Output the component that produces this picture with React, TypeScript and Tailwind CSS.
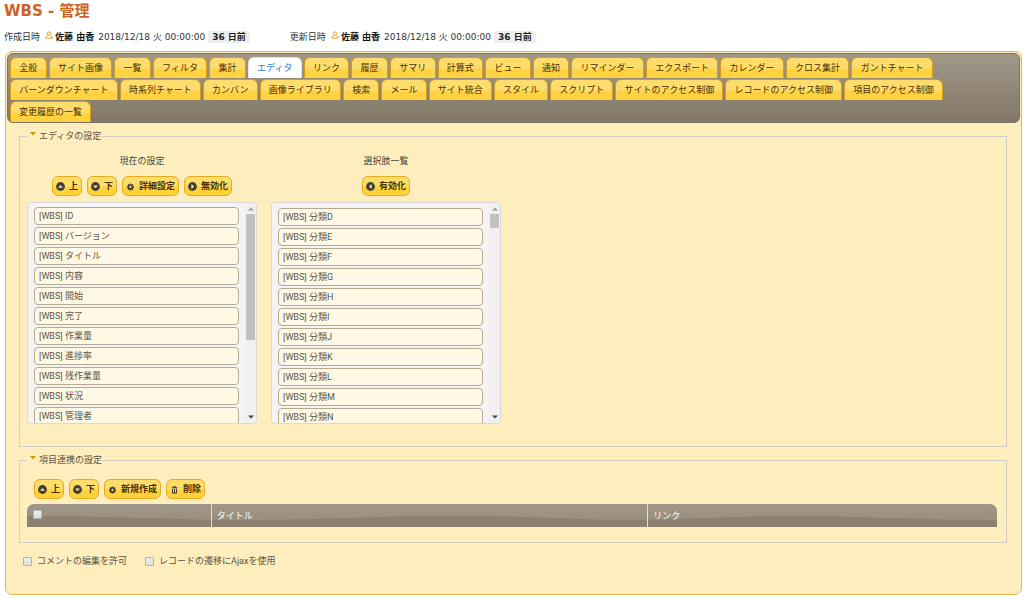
import React from 'react';
import { clsx } from 'clsx';

type IconName = 'up' | 'down' | 'left' | 'right' | 'gear' | 'trash';

const firstTabs = [
  '全般', 'サイト画像', '一覧', 'フィルタ', '集計', 'エディタ', 'リンク', '履歴', 'サマリ', '計算式',
  'ビュー', '通知', 'リマインダー', 'エクスポート', 'カレンダー', 'クロス集計', 'ガントチャート'
];

const secondTabs = [
  'バーンダウンチャート', '時系列チャート', 'カンバン', '画像ライブラリ', '検索', 'メール', 'サイト統合',
  'スタイル', 'スクリプト', 'サイトのアクセス制御', 'レコードのアクセス制御', '項目のアクセス制御'
];

const lastTabs = ['変更履歴の一覧'];

const currentColumns = ['ID', 'バージョン', 'タイトル', '内容', '開始', '完了', '作業量', '進捗率', '残作業量', '状況', '管理者'];
const sourceColumns = ['分類D', '分類E', '分類F', '分類G', '分類H', '分類I', '分類J', '分類K', '分類L', '分類M', '分類N'];

const arrows = {
  up: 'M2.6 5.4h3.8L4.5 3.3z',
  down: 'M2.6 3.8h3.8L4.5 5.9z',
  left: 'M5.4 2.5v4L3.2 4.5z',
  right: 'M3.7 2.5v4l2.2-2z'
};

function ButtonIcon({ name }: { name: IconName }) {
  return (
    <svg viewBox="0 0 9 9" className="h-[9px] w-[9px] shrink-0" aria-hidden="true">
      {name === 'gear' ? (
        <>
          <circle cx="4.5" cy="5" r="2" fill="none" stroke="#3d3d3d" strokeWidth="1.7" />
          <path d="M4.5 1.5v1.2M4.5 7.3v1.2M1 5h1.2M6.8 5H8M2 2.5l1 1M6 6.5l1 1M7 2.5l-1 1M3 6.5l-1 1" stroke="#3d3d3d" strokeWidth="1.4" />
        </>
      ) : name === 'trash' ? (
        <>
          <path d="M1.5 2.8h6M3.5 2.6V1.6h2v1" fill="none" stroke="#3d3d3d" />
          <path d="M2.5 3.8v4.3h4V3.8M4.5 4v4" fill="none" stroke="#3d3d3d" />
        </>
      ) : (
        <>
          <circle cx="4.5" cy="4.5" r="4.4" fill="#3d3d3d" />
          <path d={arrows[name]} fill="#ffe27a" stroke="#ffe27a" strokeWidth="0.6" />
        </>
      )}
    </svg>
  );
}

function ActionButton({ icon, children }: { icon: IconName; children: React.ReactNode }) {
  return (
    <button
      type="button"
      className="flex h-5 items-center gap-1 whitespace-nowrap rounded-[6px] border border-[#e5ab22] bg-linear-to-b from-[#fede6b] from-50% to-[#ffd23a] to-60% px-[3px] font-bold text-[#4c3000]"
    >
      <ButtonIcon name={icon} />
      {children}
    </button>
  );
}

function TabRow({ tabs, className }: { tabs: string[]; className?: string }) {
  return (
    <div className={clsx('flex gap-x-[2px]', className)}>
      {tabs.map((tab) => (
        <a
          key={tab}
          href="#"
          role="tab"
          aria-selected={tab === 'エディタ'}
          className={clsx(
            'flex h-[21px] items-center justify-center whitespace-nowrap rounded-t-[6px] border border-b-0 px-2',
            tab === 'エディタ'
              ? 'border-[#e8e4dc] bg-white text-[#1c84cf]'
              : 'border-[#d69c1c] bg-linear-to-b from-[#fedd6c] from-50% to-[#ffd242] to-60% text-[#4c3000]'
          )}
        >
          {tab}
        </a>
      ))}
    </div>
  );
}

function Section({ title, children }: { title: string; children: React.ReactNode }) {
  return (
    <fieldset className="mt-[7px] mr-[14px] ml-[13px] min-w-0 border border-[#d0cdc4] px-[7px]">
      <legend className="flex h-3 leading-3 text-[#5b5547]">
        <svg viewBox="0 0 6 4" className="mt-[2px] mr-[3px] ml-[3px] h-1 w-[6px]" aria-hidden="true">
          <path d="M0 0h6L3 3.6z" fill="#d19405" />
        </svg>
        {title}
      </legend>
      {children}
    </fieldset>
  );
}

interface ColumnListProps {
  title: string;
  columns: string[];
  longThumb?: boolean;
  children: React.ReactNode;
}

function ColumnList({ title, columns, longThumb, children }: ColumnListProps) {
  return (
    <div className="w-[230px]">
      <h2 className="text-center leading-[14px]">{title}</h2>
      <div className="mt-2 flex justify-center gap-[5px]">{children}</div>
      <div className="mt-[6px] flex h-[222px] justify-between overflow-hidden rounded-[4px] border border-[#d9d9d9] bg-[#f4f4f4] pl-[6px]">
        <ul className={clsx('flex w-[205px] flex-col gap-[2px] text-[#5b5547]', longThumb ? 'pt-1' : 'pt-[5px]')}>
          {columns.map((column) => (
            <li
              key={column}
              className="flex h-[18px] shrink-0 items-center rounded-[4px] border border-[#b5aa90] bg-[#fff8e4] pl-1 font-[Roboto,'Noto_Sans_CJK_JP',sans-serif]"
            >
              [WBS] {column}
            </li>
          ))}
        </ul>
        {/* Scroll bar */}
        <div className="flex w-[11px] flex-col items-center bg-[#f0f0f0] py-1">
          <svg viewBox="0 0 6 4" className="h-1 w-[6px]" aria-hidden="true">
            <path d="M0 3.5h6L3 .5z" fill="#9b9b9b" />
          </svg>
          <span className={clsx('mt-[3px] w-[9px] bg-[#c1c1c1]', longThumb ? 'h-[126px]' : 'h-[14px]')} />
          <svg viewBox="0 0 6 4" className="mt-auto h-1 w-[6px]" aria-hidden="true">
            <path d="M0 .5h6L3 3.5z" fill="#444" />
          </svg>
        </div>
      </div>
    </div>
  );
}

function Stamp({ label }: { label: string }) {
  return (
    <div className="flex items-center whitespace-nowrap text-[#333]">
      <span>{label}</span>
      <svg viewBox="0 0 8 8" className="mr-[2px] mb-1 ml-[5px] h-2 w-2" aria-hidden="true">
        <circle cx="4" cy="2.6" r="1.7" fill="none" stroke="#d9a32b" />
        <path d="M2.6 4.8L.8 6.2v1h6.4v-1L5.4 4.8" fill="none" stroke="#d9a32b" />
      </svg>
      <b className="text-[#111]">佐藤 由香</b>
      <time className="ml-1">2018/12/18 火 00:00:00</time>
      <b className="ml-[3px] rounded-[2px] bg-[#eeeeee] px-1 leading-3 text-[#222]">36 日前</b>
    </div>
  );
}

const checkbox =
  'h-[9px] w-[9px] shrink-0 appearance-none rounded-[1px] border border-[#b4b4b4] bg-linear-to-b from-[#eeeeee] to-[#dcdcdc] checked:bg-[#4c3000]';

export default function App() {
  return (
    <div className="bg-white pb-1 font-['DejaVu_Sans','Noto_Sans_CJK_JP',sans-serif] text-[9px] leading-[14px] text-[#4a4539]">
      <header className="pl-1">
        <h1 className="text-[15px] font-bold leading-[22px] text-[#cf6227]">WBS - 管理</h1>
        <div className="mt-[6px] flex h-[18px] gap-10">
          <Stamp label="作成日時" />
          <Stamp label="更新日時" />
        </div>
      </header>

      <main className="mt-[5px] mr-[2px] ml-[5px] rounded-[7px] border border-[#e6b84f] bg-[#feedbd] pb-[27px]">
        <nav
          role="tablist"
          className="mx-px mt-px flex flex-col gap-px overflow-hidden rounded-[6px] border border-[#7d7363] bg-linear-to-b from-[#a1988a] to-[#837866] pt-[3px] pl-[2px]"
        >
          <TabRow tabs={firstTabs} className="pr-[86px] *:grow" />
          <TabRow tabs={secondTabs} className="pr-[76px] *:grow" />
          <TabRow tabs={lastTabs} />
        </nav>

        <Section title="エディタの設定">
          <div className="flex gap-[14px] pt-3 pb-[22px]">
            <ColumnList title="現在の設定" columns={currentColumns} longThumb>
              <ActionButton icon="up">上</ActionButton>
              <ActionButton icon="down">下</ActionButton>
              <ActionButton icon="gear">詳細設定</ActionButton>
              <ActionButton icon="right">無効化</ActionButton>
            </ColumnList>
            <ColumnList title="選択肢一覧" columns={sourceColumns}>
              <ActionButton icon="left">有効化</ActionButton>
            </ColumnList>
          </div>
        </Section>

        <Section title="項目連携の設定">
          <div className="pr-[2px] pt-[13px] pb-[15px]">
            <div className="flex gap-[5px] pl-[7px]">
              <ActionButton icon="up">上</ActionButton>
              <ActionButton icon="down">下</ActionButton>
              <ActionButton icon="gear">新規作成</ActionButton>
              <ActionButton icon="trash">削除</ActionButton>
            </div>
            <div className="relative mt-[5px] overflow-hidden rounded-t-[7px] bg-linear-to-b from-[#a0978a] to-[#968c7b]">
              <svg viewBox="0 0 970 23" preserveAspectRatio="none" className="absolute inset-0 h-full w-full" aria-hidden="true">
                <path d="M0 12C90 12 150 16 220 16S350 12 430 12S540 16 600 16S710 12 770 12S890 16 970 16V23H0Z" fill="#8c816e" />
              </svg>
              <table className="relative w-full table-fixed text-left text-white">
                <thead>
                  <tr className="h-[23px]">
                    <th className="w-[19%] pb-[2px] pl-[6px] font-normal">
                      <input type="checkbox" aria-label="すべて選択" className={clsx(checkbox, 'block')} />
                    </th>
                    <th className="w-[45%] border-l border-[#e4e0d8] pl-[5px] font-normal">タイトル</th>
                    <th className="border-l border-[#e4e0d8] pl-[5px] font-normal">リンク</th>
                  </tr>
                </thead>
              </table>
            </div>
          </div>
        </Section>

        <div className="mt-3 ml-[17px] flex h-3 items-center gap-[18px] text-[#5b5547]">
          <label className="flex items-center gap-[5px]">
            <input type="checkbox" className={checkbox} />
            コメントの編集を許可
          </label>
          <label className="flex items-center gap-[5px] font-[Roboto,'Noto_Sans_CJK_JP',sans-serif]">
            <input type="checkbox" className={checkbox} />
            レコードの遷移にAjaxを使用
          </label>
        </div>
      </main>
    </div>
  );
}
